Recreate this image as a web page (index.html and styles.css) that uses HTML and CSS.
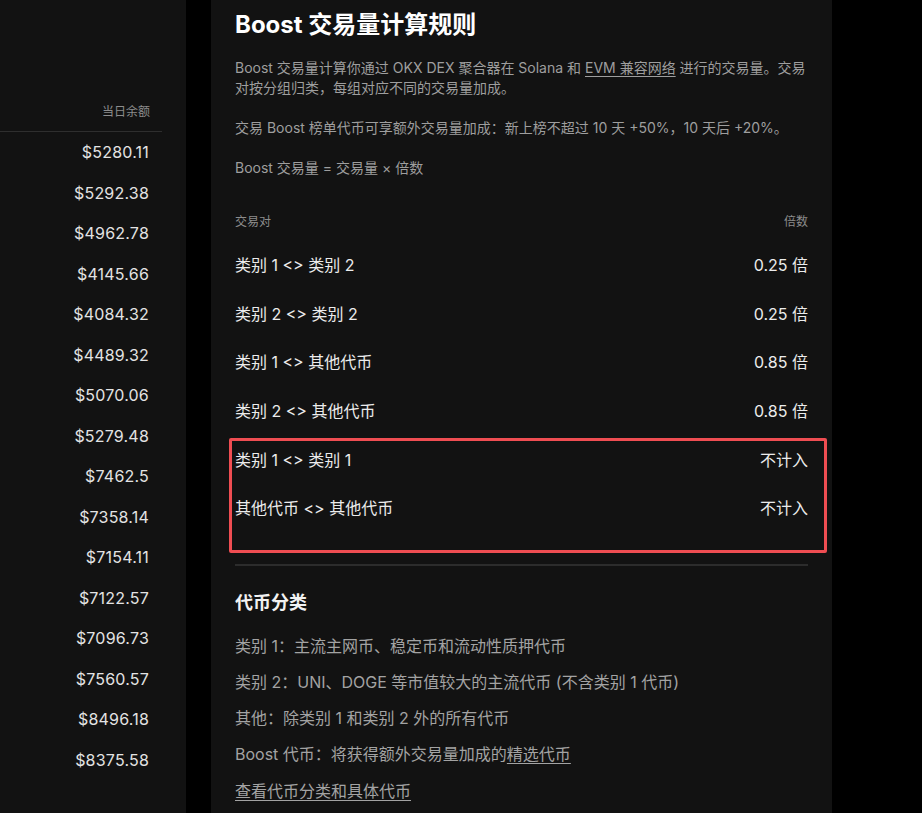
FILE: index.html
```html
<!DOCTYPE html>
<html lang="zh-CN">
<head>
<meta charset="utf-8">
<title>Boost 交易量计算规则</title>
<link rel="stylesheet" href="styles.css">
</head>
<body>
<div class="page">

  <div class="balance_panel">
    <div class="balance_table">
      <div class="balance_head">当日余额</div>
      <div class="balance_row">$5280.11</div>
      <div class="balance_row">$5292.38</div>
      <div class="balance_row">$4962.78</div>
      <div class="balance_row">$4145.66</div>
      <div class="balance_row">$4084.32</div>
      <div class="balance_row">$4489.32</div>
      <div class="balance_row">$5070.06</div>
      <div class="balance_row">$5279.48</div>
      <div class="balance_row">$7462.5</div>
      <div class="balance_row">$7358.14</div>
      <div class="balance_row">$7154.11</div>
      <div class="balance_row">$7122.57</div>
      <div class="balance_row">$7096.73</div>
      <div class="balance_row">$7560.57</div>
      <div class="balance_row">$8496.18</div>
      <div class="balance_row">$8375.58</div>
    </div>
  </div>

  <div class="rules_panel">
    <h1 class="rules_title">Boost 交易量计算规则</h1>
    <p class="rules_text">Boost 交易量计算你通过 OKX DEX 聚合器在 Solana 和 <a href="#">EVM 兼容网络</a> 进行的交易量。交易对按分组归类，每组对应不同的交易量加成。</p>
    <p class="rules_text">交易 Boost 榜单代币可享额外交易量加成：新上榜不超过 10 天 +50%，10 天后 +20%。</p>
    <p class="rules_text">Boost 交易量 = 交易量 × 倍数</p>

    <div class="rate_table">
      <div class="rate_head">
        <span>交易对</span>
        <span>倍数</span>
      </div>
      <div class="rate_row"><span>类别 1 &lt;&gt; 类别 2</span><span>0.25 倍</span></div>
      <div class="rate_row"><span>类别 2 &lt;&gt; 类别 2</span><span>0.25 倍</span></div>
      <div class="rate_row"><span>类别 1 &lt;&gt; 其他代币</span><span>0.85 倍</span></div>
      <div class="rate_row"><span>类别 2 &lt;&gt; 其他代币</span><span>0.85 倍</span></div>
      <div class="rate_group">
        <div class="rate_row"><span>类别 1 &lt;&gt; 类别 1</span><span>不计入</span></div>
        <div class="rate_row"><span>其他代币 &lt;&gt; 其他代币</span><span>不计入</span></div>
        <div class="mark_box"></div>
      </div>
    </div>

    <div class="token_section">
      <h2 class="token_title">代币分类</h2>
      <p class="token_line">类别 1：主流主网币、稳定币和流动性质押代币</p>
      <p class="token_line">类别 2：UNI、DOGE 等市值较大的主流代币 (不含类别 1 代币)</p>
      <p class="token_line">其他：除类别 1 和类别 2 外的所有代币</p>
      <p class="token_line">Boost 代币：将获得额外交易量加成的<a href="#">精选代币</a></p>
      <p class="token_line"><a href="#">查看代币分类和具体代币</a></p>
    </div>
  </div>

</div>
</body>
</html>
```

FILE: styles.css
```css
html, body{
  margin: 0;
  padding: 0;
  background-color: #000;
  height: 100%;
  overflow: hidden;
}

body{
  font-family: 'Inter', 'Noto Sans CJK SC', sans-serif;
  color: #e6e6e6;
}

a{
  color: inherit;
  text-decoration: underline;
  text-underline-offset: 3px;
}

.page{
  display: flex;
  height: 813px;
}

/* left balance column */
.balance_panel{
  width: 186px;
  background-color: #121212;
  flex-shrink: 0;
}

.balance_table{
  padding-top: 104px;
  padding-right: 24px;
}

.balance_head{
  font-size: 12px;
  line-height: 16px;
  color: #8c8c8c;
  text-align: right;
  padding-right: 12px;
  padding-bottom: 11px;
  border-bottom: 1px solid #2e2e2e;
}

.balance_row{
  height: 40.5px;
  display: flex;
  align-items: center;
  justify-content: flex-end;
  padding-right: 13px;
  font-size: 16px;
  letter-spacing: 0.2px;
  color: #e3e3e3;
}

/* rules dialog */
.rules_panel{
  margin-left: 25px;
  width: 573px;
  padding: 9px 24px 0 24px;
  background-color: #121212;
  flex-shrink: 0;
}

.rules_title{
  margin: 0 0 17px 0;
  font-size: 24px;
  line-height: 32px;
  font-weight: 700;
  color: #fff;
}

.rules_text{
  margin: 0 0 20px 0;
  font-size: 14px;
  line-height: 20px;
  color: #9e9e9e;
}

.rate_table{
  margin-top: 22px;
  padding-bottom: 32px;
  border-bottom: 2px solid #2c2c2c;
}

.rate_head{
  height: 40px;
  display: flex;
  justify-content: space-between;
  align-items: center;
  font-size: 12px;
  color: #8c8c8c;
}

.rate_row{
  height: 48.6px;
  display: flex;
  justify-content: space-between;
  align-items: center;
  font-size: 16px;
  color: #ececec;
}

.rate_group{
  position: relative;
}

.mark_box{
  position: absolute;
  left: -6px;
  right: -19px;
  top: 4px;
  bottom: -21px;
  border: 3px solid #ef4d52;
  border-radius: 2px;
}

.token_section{
  padding-top: 25px;
}

.token_title{
  margin: 0 0 19px 0;
  font-size: 18px;
  line-height: 24px;
  font-weight: 700;
  color: #f2f2f2;
}

.token_line{
  margin: 0 0 12.3px 0;
  font-size: 16px;
  line-height: 24px;
  color: #a3a3a3;
}
```
